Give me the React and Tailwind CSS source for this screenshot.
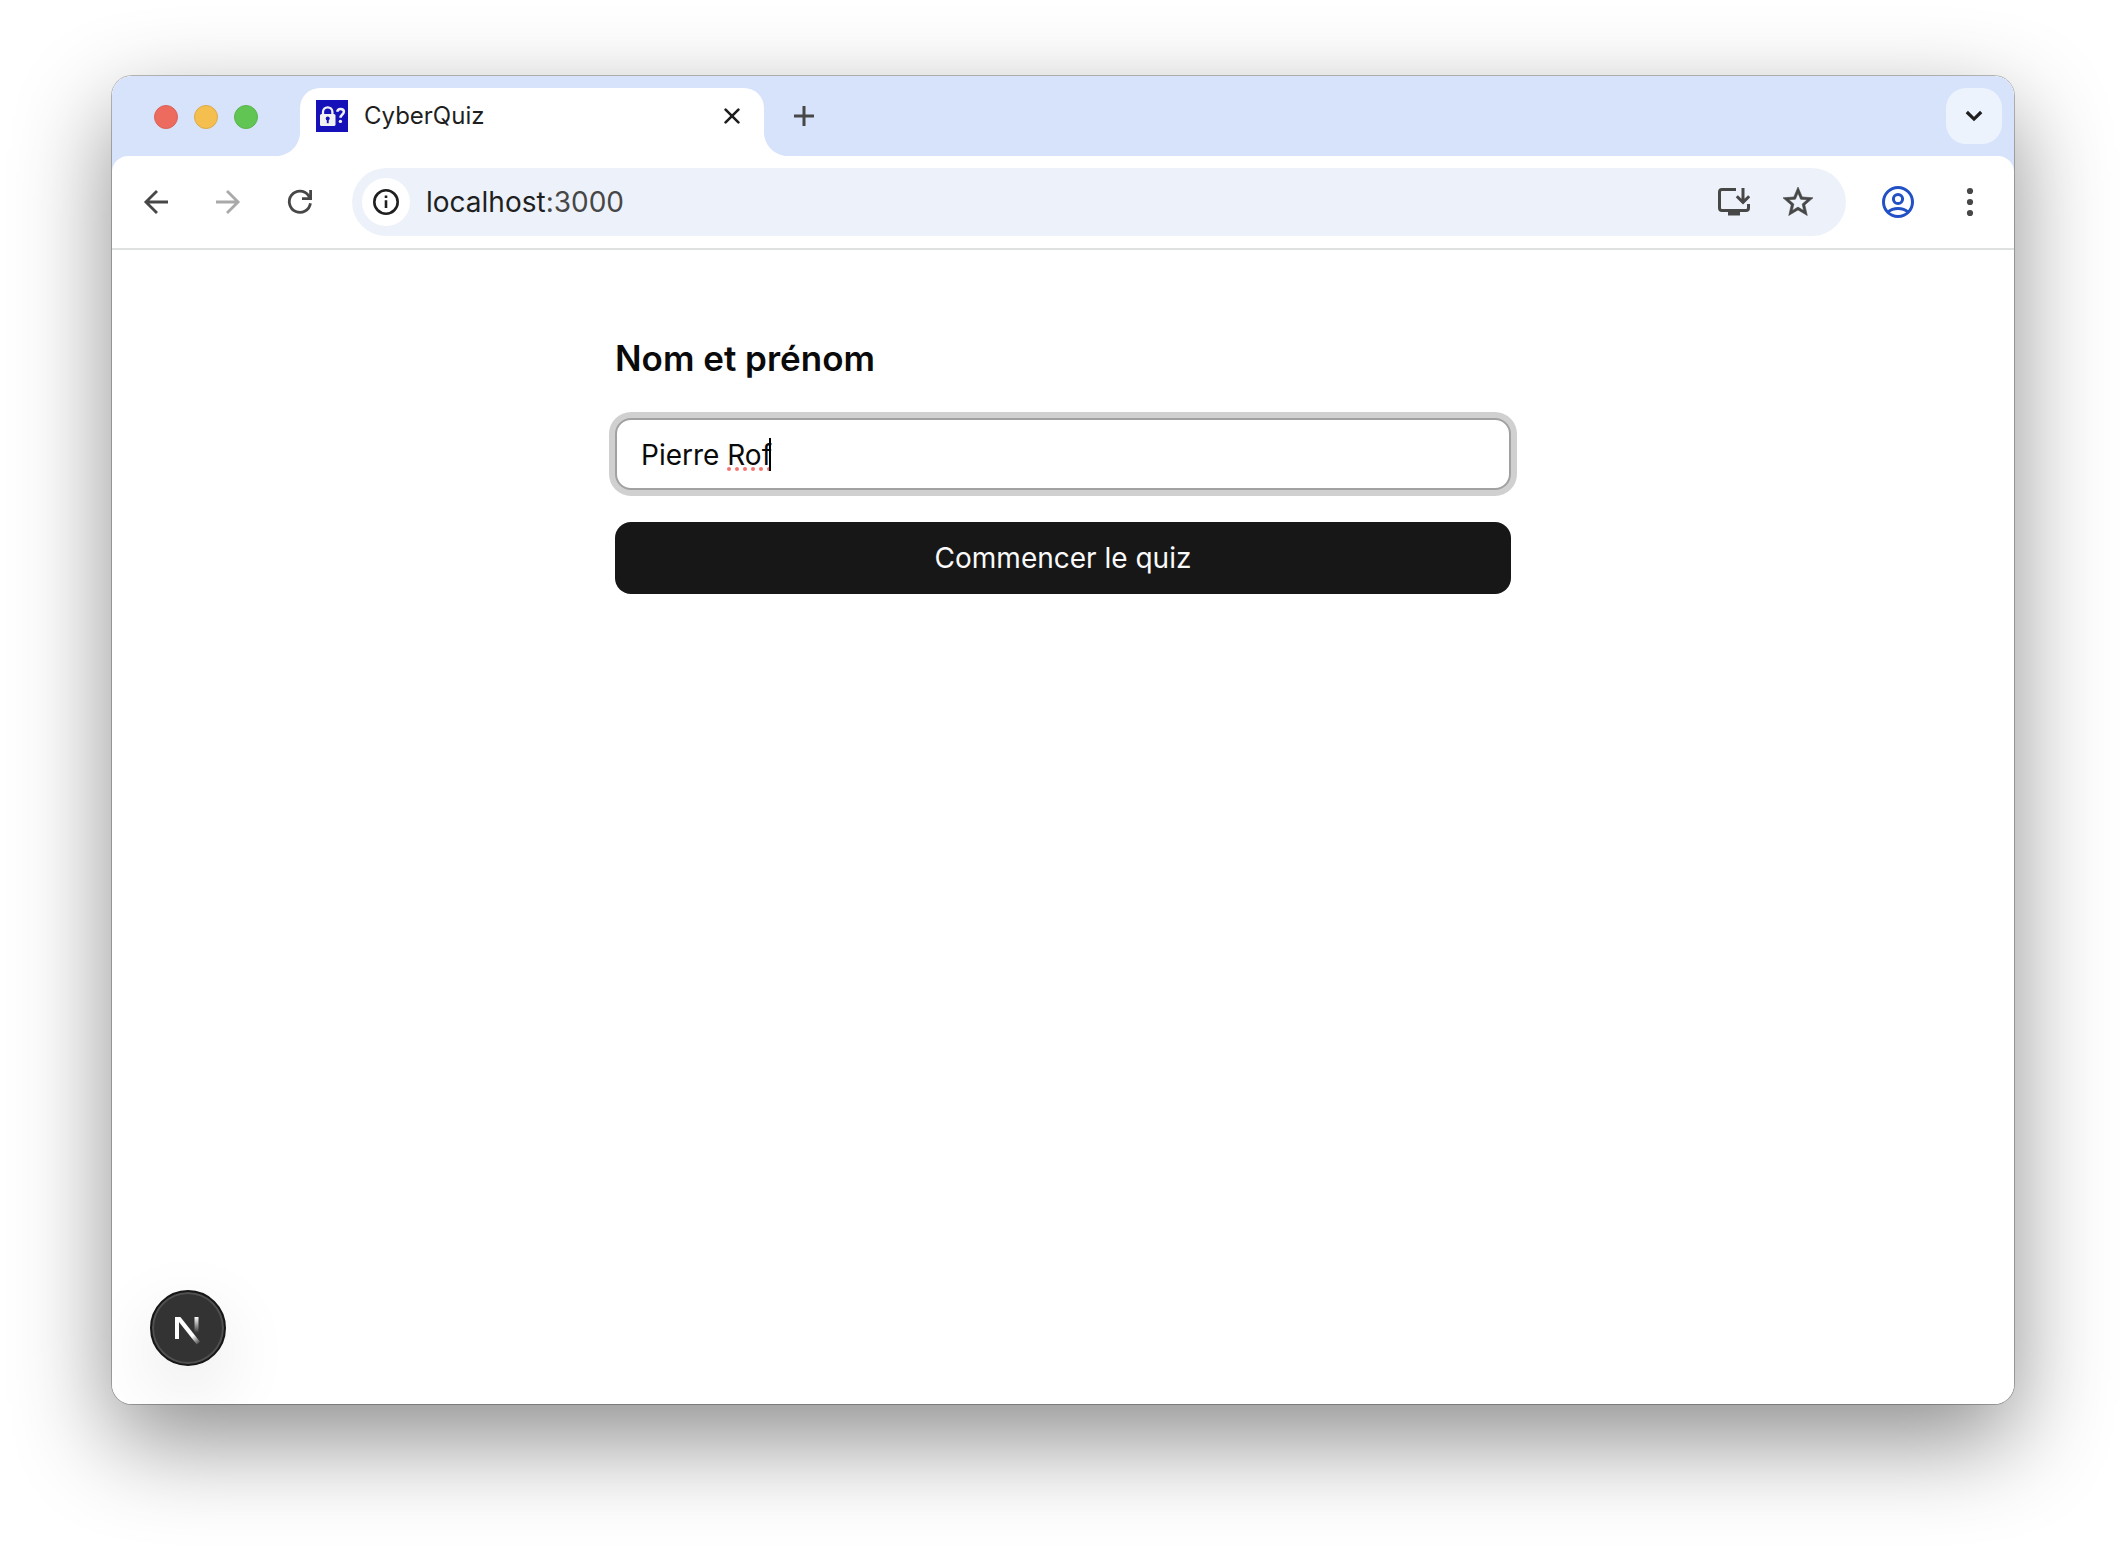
import React, { useState } from "react";

function TabFlare({ flip }) {
  return (
    <svg
      className={flip ? "size-6 shrink-0 self-end -scale-x-100" : "size-6 shrink-0 self-end"}
      viewBox="0 0 24 24"
      fill="#ffffff"
      aria-hidden="true"
    >
      <path d="M24 0v24H0C13.3 24 24 13.3 24 0Z" />
    </svg>
  );
}

function Favicon() {
  return (
    <svg className="size-8 shrink-0" viewBox="0 0 32 32" aria-hidden="true">
      <rect width="32" height="32" fill="#1510b8" />
      <rect x="4" y="14" width="15.5" height="12" rx="1.6" fill="#f1f1f1" />
      <path d="M7 14.5V12a4.7 4.7 0 0 1 9.4 0v2.5" fill="none" stroke="#f1f1f1" strokeWidth="2.3" />
      <circle cx="11.7" cy="18.6" r="2" fill="#1510b8" />
      <rect x="10.8" y="19" width="1.9" height="4.2" fill="#1510b8" />
      <path
        d="M21.2 11.8c.3-2 1.5-2.9 3.3-2.9 2 0 3.4 1.1 3.4 2.9 0 2.7-3.4 2.7-3.4 6"
        fill="none"
        stroke="#f1f1f1"
        strokeWidth="2.5"
      />
      <circle cx="24.4" cy="21.4" r="1.7" fill="#f1f1f1" />
    </svg>
  );
}

function TabStrip() {
  return (
    <header className="flex h-20 items-stretch bg-[#d7e2fb] pr-3">
      <div className="flex w-[164px] shrink-0 items-center gap-4 pt-0.5 pl-[42px]">
        <button aria-label="Fermer la fenêtre" className="size-6 rounded-full border border-[#d9635a] bg-[#ec6a5e]" />
        <button aria-label="Réduire la fenêtre" className="size-6 rounded-full border border-[#dbab48] bg-[#f4bf4f]" />
        <button aria-label="Agrandir la fenêtre" className="size-6 rounded-full border border-[#5bb34c] bg-[#61c554]" />
      </div>
      <TabFlare />
      <div className="mt-3 flex w-[464px] items-start rounded-t-[20px] bg-white pt-3 pr-6 pl-4">
        <Favicon />
        <span className="ml-4 flex-1 text-[24px] leading-8 text-[#1f1f1f]">CyberQuiz</span>
        <button aria-label="Fermer l'onglet" className="flex h-8 w-4 items-center justify-center">
          <svg className="size-4" viewBox="0 0 16 16" fill="none" stroke="#1f1f1f" strokeWidth="2.6" strokeLinecap="round">
            <path d="M1.6 1.6 14.4 14.4M14.4 1.6 1.6 14.4" />
          </svg>
        </button>
      </div>
      <TabFlare flip />
      <button aria-label="Nouvel onglet" className="mt-[30px] ml-1.5 flex size-5 items-center justify-center">
        <svg className="size-5" viewBox="0 0 20 20" fill="none" stroke="#474747" strokeWidth="3">
          <path d="M10 0v20M0 10h20" />
        </svg>
      </button>
      <button
        aria-label="Rechercher dans les onglets"
        className="mt-3 ml-auto flex size-14 items-center justify-center rounded-[20px] bg-[#ecf3fd]"
      >
        <svg className="size-6" viewBox="0 0 24 24" fill="none" stroke="#1f1f1f" strokeWidth="3.2">
          <path d="m4.8 8 7.2 7.1L19.2 8" />
        </svg>
      </button>
    </header>
  );
}

function Toolbar() {
  return (
    <div className="bg-[#d7e2fb]">
      <nav className="flex h-[94px] items-center rounded-t-2xl border-b-2 border-[#dfe1e0] bg-white pr-7">
        <div className="flex w-60 shrink-0 items-center gap-10 pl-7">
          <button aria-label="Précédent" className="flex size-8 items-center justify-center">
            <svg className="size-8" viewBox="0 0 32 32" fill="none" stroke="#474747" strokeWidth="2.8">
              <path d="M28 16H6M17 4.9 5.9 16 17 27.1" />
            </svg>
          </button>
          <button aria-label="Suivant" disabled className="flex size-8 items-center justify-center">
            <svg className="size-8" viewBox="0 0 32 32" fill="none" stroke="#a9a9a9" strokeWidth="2.8">
              <path d="M4 16h22M15 4.9 26.1 16 15 27.1" />
            </svg>
          </button>
          <button aria-label="Actualiser" className="flex size-8 items-center justify-center">
            <svg className="size-8" viewBox="0 0 32 32" fill="none" stroke="#474747" strokeWidth="2.8">
              <path d="M26.4 17.2A10.6 10.6 0 1 1 24.4 9.4L26 12" />
              <path d="M26.6 4v8.6H18" />
            </svg>
          </button>
        </div>
        <div className="flex h-[68px] flex-1 items-center rounded-full bg-[#edf2fa] pr-8 pl-2.5">
          <button aria-label="Informations sur le site" className="flex size-12 items-center justify-center rounded-full bg-white">
            <svg className="size-[26px]" viewBox="0 0 26 26" fill="none" stroke="#1f1f1f" strokeWidth="2.6">
              <circle cx="13" cy="13" r="11.7" />
              <path d="M13 11.2v7.8M13 6.4v2.7" />
            </svg>
          </button>
          <div className="ml-4 flex-1 text-[28px] leading-9 text-[#1f1f1f]">
            localhost<span className="text-[#474747]">:3000</span>
          </div>
          <div className="flex items-center gap-8">
            <button aria-label="Installer l'application">
              <svg className="size-8" viewBox="0 0 32 32" fill="none" stroke="#474747" strokeWidth="3">
                <path d="M18 3.5H4A2.5 2.5 0 0 0 1.5 6v16A2.5 2.5 0 0 0 4 24.5h24a2.5 2.5 0 0 0 2.5-2.5v-4" />
                <path d="M10 27.5h12" strokeWidth="4" />
                <path d="M25 2v14M18.8 10.2 25 16.4l6.2-6.2" />
              </svg>
            </button>
            <button aria-label="Ajouter aux favoris">
              <svg className="size-8" viewBox="1.33 1.33 21.33 21.33" fill="#474747" stroke="#474747" strokeWidth="0.4">
                <path d="M22 9.24l-7.19-.62L12 2 9.19 8.63 2 9.24l5.46 4.73L5.82 21 12 17.27 18.18 21l-1.63-7.03L22 9.24zM12 15.4l-3.76 2.27 1-4.28-3.32-2.88 4.38-.38L12 6.1l1.71 4.04 4.38.38-3.32 2.88 1 4.28L12 15.4z" />
              </svg>
            </button>
          </div>
        </div>
        <div className="ml-9 flex items-center gap-10">
          <button aria-label="Profil">
            <svg className="size-8" viewBox="0 0 32 32" fill="none" stroke="#2251c5" strokeWidth="3">
              <circle cx="16" cy="16" r="14.5" />
              <circle cx="16" cy="13" r="4.6" />
              <path d="M6 26c2.6-2.4 6-3.6 10-3.6s7.4 1.2 10 3.6" />
            </svg>
          </button>
          <button aria-label="Menu">
            <svg className="size-8" viewBox="0 0 32 32" fill="#474747">
              <circle cx="16" cy="5" r="3.1" />
              <circle cx="16" cy="16" r="3.1" />
              <circle cx="16" cy="27" r="3.1" />
            </svg>
          </button>
        </div>
      </nav>
    </div>
  );
}

function NameForm() {
  const [name, setName] = useState("Pierre Rof");
  return (
    <form className="mx-auto flex w-full max-w-4xl flex-col" onSubmit={(e) => e.preventDefault()}>
      <label htmlFor="name" className="text-[35px] leading-14 font-semibold text-[#0a0a0a]">
        Nom et prénom
      </label>
      <div className="relative mt-8">
        <input
          id="name"
          type="text"
          value={name}
          spellCheck={false}
          onChange={(e) => setName(e.target.value)}
          className="block h-[72px] w-full rounded-2xl border-2 border-[#a1a1a1] bg-white px-6 pt-0.5 text-[28px] leading-10 text-[#0a0a0a] ring-6 ring-[#d0d0d0] outline-none"
        />
        <svg
          className="pointer-events-none absolute top-5 left-28 h-9 w-11"
          viewBox="0 0 44 36"
          aria-hidden="true"
        >
          <g fill="#f2766f">
            <circle cx="2" cy="31" r="2" />
            <circle cx="10" cy="31" r="2" />
            <circle cx="18" cy="31" r="2" />
            <circle cx="26" cy="31" r="2" />
            <circle cx="34" cy="31" r="2" />
            <circle cx="42" cy="31" r="2" />
          </g>
          <rect x="42" y="0" width="2" height="33" fill="#000000" />
        </svg>
      </div>
      <button
        type="submit"
        className="mt-8 h-[72px] w-full rounded-2xl bg-[#171717] text-[28px] leading-10 text-[#fafafa]"
      >
        Commencer le quiz
      </button>
    </form>
  );
}

function DevToolsBadge() {
  return (
    <button
      aria-label="Outils de développement Next.js"
      className="flex size-[76px] items-center justify-center rounded-full border-2 border-[#171717] bg-[#333333] shadow-[inset_0_0_0_2px_#505050,0_24px_72px_rgba(0,0,0,0.1)]"
    >
      <svg className="size-[72px]" viewBox="0 0 72 72" fill="none" strokeWidth="4">
        <defs>
          <linearGradient id="diagonal" gradientUnits="userSpaceOnUse" x1="36" y1="40" x2="47" y2="53">
            <stop stopColor="#ffffff" />
            <stop offset="0.35" stopColor="#ffffff" />
            <stop offset="1" stopColor="#ffffff" stopOpacity="0" />
          </linearGradient>
          <linearGradient id="stem" gradientUnits="userSpaceOnUse" x1="44" y1="25" x2="44" y2="41">
            <stop stopColor="#ffffff" />
            <stop offset="1" stopColor="#ffffff" stopOpacity="0" />
          </linearGradient>
        </defs>
        <path d="M25 47V25" stroke="#ffffff" />
        <path d="M23 25h5.4L48 49.8l-3.2 2.6L23 25Z" fill="url(#diagonal)" />
        <path d="M44.5 25v16" stroke="url(#stem)" />
      </svg>
    </button>
  );
}

export default function App() {
  return (
    <div className="flex min-h-screen bg-white px-28 pt-[76px] pb-[148px] font-[Inter,sans-serif]">
      <div className="flex flex-1 flex-col rounded-[20px] bg-white shadow-[0_0_0_1px_rgba(0,0,0,0.25),0_36px_96px_rgba(0,0,0,0.45)]">
        <div className="flex flex-1 flex-col overflow-hidden rounded-[20px] bg-white">
          <TabStrip />
          <Toolbar />
          <main className="flex flex-1 flex-col justify-between pt-20">
            <NameForm />
            <div className="px-[38px] pb-[38px]">
              <DevToolsBadge />
            </div>
          </main>
        </div>
      </div>
    </div>
  );
}
